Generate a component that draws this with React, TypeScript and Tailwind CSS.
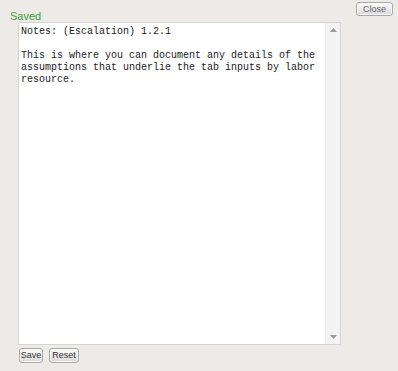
import React from "react";

const btn =
  "flex items-center justify-center rounded-[3px] border border-[#a9a9a9] bg-gradient-to-b from-[#fdfdfd] to-[#d9d9d9] text-[9px] leading-none text-[#333] shadow-[inset_0_0_0_1px_#f7f7f7]";

export default function App() {
  return (
    <div
      className="w-[398px] h-[371px] bg-[#ecebe8] flex flex-col"
      style={{ fontFamily: '"Liberation Sans", Arial, sans-serif' }}
    >
      <div className="flex justify-between items-start h-[22px]">
        <div className="pl-[10px] pt-[10px] text-[11px] leading-[12px] text-[#3c9c3c]">Saved</div>
        <button className={`${btn} h-[14px] mt-[2px] mr-[5px] w-[37px] text-[#666]`}>Close</button>
      </div>
      <div className="ml-[18px] w-[323px] h-[323px] border border-[#d4d4d4] bg-white flex">
        <div
          className="flex-1 pl-[2px] pt-[3px] text-[10px] leading-[12px] text-[#222] whitespace-pre"
          style={{ fontFamily: '"Liberation Mono", "Courier New", monospace' }}
        >
          {"Notes: (Escalation) 1.2.1\n\nThis is where you can document any details of the\nassumptions that underlie the tab inputs by labor\nresource."}
        </div>
        <div className="w-[15px] bg-[#f4f4f4] border-l border-[#ececec] flex flex-col justify-between items-center py-[5px]">
          <svg width="7" height="4" viewBox="0 0 7 4">
            <path d="M3.5 0 L7 4 L0 4 Z" fill="#9a9a9a" />
          </svg>
          <svg width="7" height="4" viewBox="0 0 7 4">
            <path d="M0 0 L7 0 L3.5 4 Z" fill="#9a9a9a" />
          </svg>
        </div>
      </div>
      <div className="flex gap-[6px] ml-[19px] mt-[3px]">
        <button className={`${btn} h-[15px] w-[24px]`}>Save</button>
        <button className={`${btn} h-[15px] w-[30px]`}>Reset</button>
      </div>
    </div>
  );
}
